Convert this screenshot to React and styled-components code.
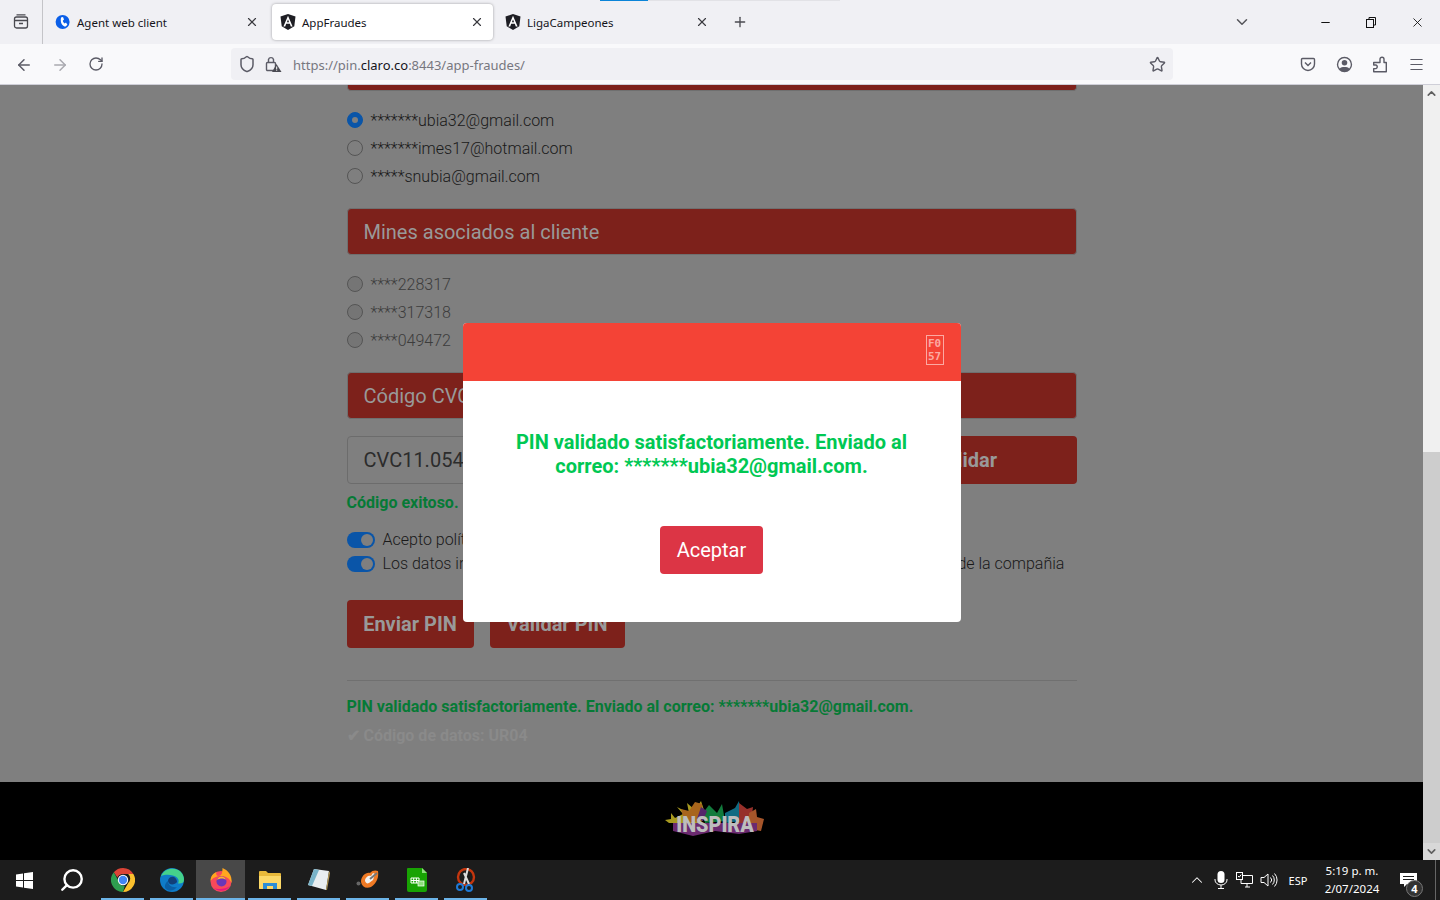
import React from 'react';
import styled, { createGlobalStyle } from 'styled-components';
import { ArrowLeft, ArrowRight, RotateCw, Shield, Star, ChevronDown, Minus, X, Plus, Menu, ChevronUp, Search } from 'lucide-react';

const GlobalStyle = createGlobalStyle`
  html, body { margin: 0; padding: 0; height: 100%; overflow: hidden; }
  body { font-family: Roboto, "Liberation Sans", sans-serif; }
  * { box-sizing: border-box; }
`;

const Screen = styled.div`
  width: 1440px;
  height: 900px;
  display: flex;
  flex-direction: column;
  overflow: hidden;
  background: #fff;
`;

/* ---- browser chrome ---- */
const TabStrip = styled.div`
  height: 44px;
  flex: none;
  display: flex;
  align-items: stretch;
  background: #f0f0f4;
  position: relative;
  font-family: "Noto Sans", "Open Sans", sans-serif;
`;
const LoadLine = styled.div`
  position: absolute;
  top: 0;
  left: 600px;
  width: 240px;
  height: 1px;
  background: linear-gradient(90deg, #0a84d8 0 48px, #e2e2e6 48px);
`;
const ViewsButton = styled.div`
  width: 43px;
  margin-right: 2px;
  display: flex;
  align-items: center;
  justify-content: center;
  border-right: 1px solid #c4c4c8;
  color: #4a4a50;
`;
const Tab = styled.div`
  width: 221px;
  height: 36px;
  margin: 4px 2px 0;
  padding: 0 9px 0 8px;
  display: flex;
  align-items: center;
  gap: 6px;
  font-size: 11.5px;
  color: #15141a;
  border-radius: 4px;
  background: ${p => (p.$active ? '#fff' : 'transparent')};
  box-shadow: ${p => (p.$active ? '0 0 3px rgba(0,0,0,.35)' : 'none')};
`;
const TabTitle = styled.span`
  flex: 1;
  white-space: nowrap;
`;
const TabClose = styled(X)`
  color: #3a3a40;
`;
const NewTab = styled.div`
  width: 36px;
  margin-left: 2px;
  display: flex;
  align-items: center;
  justify-content: center;
  color: #4a4a50;
`;
const StripEnd = styled.div`
  margin-left: auto;
  display: flex;
  align-items: center;
  color: #111;
`;
const ListTabs = styled.div`
  margin-right: 51px;
  display: flex;
  color: #55555a;
`;
const WinBtn = styled.div`
  width: 46px;
  height: 44px;
  display: flex;
  align-items: center;
  justify-content: center;
`;
const NavBar = styled.div`
  height: 41px;
  flex: none;
  display: flex;
  align-items: center;
  background: #f9f9fb;
  border-bottom: 1px solid #cfcfd8;
  color: #5b5b66;
`;
const NavBtn = styled.div`
  width: 36px;
  display: flex;
  justify-content: center;
  padding-top: 1px;
  color: ${p => (p.$off ? '#a9a9b0' : '#5b5b66')};
`;
const NavBtns = styled.div`
  display: flex;
  padding-left: 6px;
`;
const UrlBox = styled.div`
  width: 942px;
  height: 32px;
  margin-left: 117px;
  padding: 0 7px;
  border-radius: 4px;
  background: #f0f0f4;
  display: flex;
  align-items: center;
  gap: 8px;
`;
const UrlText = styled.div`
  flex: 1;
  margin: 2px 0 0 3px;
  font-family: "Noto Sans", "Open Sans", sans-serif;
  font-size: 13px;
  color: #77777f;
  white-space: nowrap;
  b { font-weight: 400; color: #15141a; }
`;
const NavEnd = styled.div`
  display: flex;
  margin-left: 117px;
  align-items: center;
`;
const NavEndBtn = styled.div`
  width: 36px;
  display: flex;
  justify-content: center;
`;

/* ---- page ---- */
const Middle = styled.div`
  flex: 1;
  min-height: 0;
  display: flex;
`;
const Viewport = styled.div`
  flex: 1;
  position: relative;
  overflow: hidden;
  display: flex;
  flex-direction: column;
  background: #7f7f7f;
`;
const Scrollbar = styled.div`
  width: 17px;
  background: #f0f0f0;
  display: flex;
  flex-direction: column;
  align-items: center;
`;
const ScrollArrow = styled.div`
  height: 17px;
  flex: none;
  display: flex;
  align-items: center;
  justify-content: center;
  color: #606060;
  background: ${p => (p.$down ? '#d8d8d8' : 'transparent')};
  width: 100%;
`;
const ScrollSpace = styled.div`
  height: ${p => p.$h}px;
  flex: none;
  width: 100%;
  background: ${p => (p.$thumb ? '#cdcdcd' : 'transparent')};
`;
const Content = styled.div`
  width: 730px;
  height: 697px;
  margin: 0 auto;
  flex: none;
  font-size: 16px;
  font-weight: 300;
  color: #191919;
`;
const RedBar = styled.div`
  height: 47px;
  margin-top: ${p => p.$mt || 0}px;
  background: #7d211b;
  border: 1px solid #6f6f6f;
  border-radius: 4px;
  padding-left: 16px;
  display: flex;
  align-items: center;
  font-size: 20px;
  font-weight: 400;
  color: #999;
`;
const TopBar = styled(RedBar)`
  height: 6px;
  border-top: 0;
  border-radius: 0 0 4px 4px;
`;
const OptionList = styled.div`
  margin-top: ${p => p.$mt}px;
  display: flex;
  flex-direction: column;
`;
const Option = styled.label`
  height: 28px;
  display: flex;
  align-items: center;
  gap: 8px;
  color: ${p => (p.$muted ? '#3c3c3c' : '#191919')};
`;
const Radio = styled.span`
  width: 16px;
  height: 16px;
  border-radius: 50%;
  background: ${p => (p.$on ? '#0a55a8' : p.$muted ? '#757575' : '#7f7f7f')};
  border: 1px solid ${p => (p.$on ? '#0a55a8' : '#555')};
  display: flex;
  align-items: center;
  justify-content: center;
  &::after {
    content: '';
    width: 6px;
    height: 6px;
    border-radius: 50%;
    background: ${p => (p.$on ? '#7f7f7f' : 'transparent')};
  }
`;
const CodeRow = styled.div`
  margin-top: 17px;
  display: flex;
  gap: 16px;
`;
const CodeInput = styled.div`
  flex: 1;
  height: 48px;
  padding-left: 16px;
  border: 1px solid #6c6c6c;
  border-radius: 4px;
  display: flex;
  align-items: center;
  font-size: 20px;
  font-weight: 400;
  color: #2c2c2c;
`;
const RedButton = styled.div`
  width: ${p => p.$w}px;
  height: 48px;
  background: #7d211b;
  border-radius: 4px;
  display: flex;
  align-items: center;
  justify-content: center;
  font-size: 20px;
  font-weight: 700;
  color: #999;
`;
const GreenNote = styled.div`
  margin-top: ${p => p.$mt}px;
  height: 20px;
  line-height: 20px;
  font-size: 16px;
  font-weight: 700;
  color: #067a36;
  white-space: nowrap;
`;
const Toggles = styled.div`
  margin-top: 15px;
  display: flex;
  flex-direction: column;
`;
const ToggleRow = styled.div`
  height: 24px;
  display: flex;
  align-items: center;
  gap: 8px;
  white-space: nowrap;
`;
const ToggleLabel = styled.span`
  padding-bottom: 2px;
`;
const Toggle = styled.span`
  width: 28px;
  height: 16px;
  flex: none;
  border-radius: 8px;
  background: #0a55a8;
  display: flex;
  justify-content: flex-end;
  align-items: center;
  padding-right: 2px;
  &::after {
    content: '';
    width: 12px;
    height: 12px;
    border-radius: 50%;
    background: #7f7f7f;
  }
`;
const ButtonRow = styled.div`
  margin-top: 24px;
  display: flex;
  gap: 16px;
`;
const Rule = styled.div`
  margin-top: 32px;
  height: 1px;
  background: #707070;
`;
const DataCode = styled.div`
  margin-top: 9px;
  height: 20px;
  line-height: 20px;
  font-size: 16px;
  font-weight: 700;
  color: #8a8a8a;
`;
const Footer = styled.div`
  flex: 1;
  background: #000;
  display: flex;
  align-items: center;
  justify-content: center;
  padding: 0 0 4px 6px;
`;

/* ---- modal ---- */
const Backdrop = styled.div`
  position: absolute;
  inset: 0;
  display: flex;
  align-items: center;
  justify-content: center;
`;
const Modal = styled.div`
  width: 498px;
  height: 299px;
  border-radius: 4px;
  background: #fff;
  overflow: hidden;
  display: flex;
  flex-direction: column;
  align-items: center;
`;
const ModalHead = styled.div`
  width: 100%;
  height: 58px;
  flex: none;
  background: #f44336;
  display: flex;
  align-items: center;
  justify-content: flex-end;
  padding: 0 17px 4px 0;
`;
const CloseGlyph = styled.div`
  width: 18px;
  height: 30px;
  border: 1px solid #fca9a2;
  color: #fca9a2;
  font: 700 11px/13px "DejaVu Sans Mono", monospace;
  display: flex;
  flex-direction: column;
  align-items: center;
  justify-content: center;
`;
const ModalMessage = styled.div`
  margin-top: 49px;
  width: 420px;
  text-align: center;
  font-size: 20px;
  line-height: 24px;
  font-weight: 700;
  color: #00c853;
`;
const AcceptButton = styled.div`
  margin-top: 48px;
  width: 103px;
  height: 48px;
  border-radius: 4px;
  background: #dc3545;
  color: #fff;
  font-size: 20px;
  display: flex;
  align-items: center;
  justify-content: center;
`;

/* ---- taskbar ---- */
const Taskbar = styled.div`
  height: 40px;
  flex: none;
  background: #1c1c1c;
  display: flex;
  align-items: stretch;
  color: #fff;
  font-family: "Noto Sans", "Open Sans", sans-serif;
`;
const StartCell = styled.div`
  width: 49px;
  display: flex;
  align-items: center;
  justify-content: center;
`;
const SearchGlyph = styled(Search)`
  transform: scaleX(-1);
  margin-right: 3px;
`;
const AppCell = styled.div`
  width: 49px;
  position: relative;
  display: flex;
  align-items: center;
  justify-content: center;
  background: ${p => (p.$active ? '#484848' : 'transparent')};
  &::after {
    content: '';
    position: absolute;
    bottom: 0;
    left: ${p => (p.$active ? 0 : '3px')};
    right: ${p => (p.$active ? 0 : '3px')};
    height: 2px;
    background: #6cb4e8;
  }
`;
const Tray = styled.div`
  margin-left: auto;
  display: flex;
  align-items: center;
  font-size: 11px;
`;
const TrayIcon = styled.div`
  width: 24px;
  display: flex;
  justify-content: center;
`;
const Lang = styled.div`
  margin-left: 4px;
  width: 26px;
  text-align: center;
`;
const Clock = styled.div`
  margin-left: 7px;
  width: 68px;
  text-align: center;
  font-size: 11.5px;
  line-height: 18px;
`;
const Notif = styled.div`
  width: 42px;
  margin: 0 6px 0 1px;
  position: relative;
  display: flex;
  justify-content: center;
`;
const NotifBadge = styled.span`
  position: absolute;
  top: 7px;
  left: 19px;
  width: 17px;
  height: 17px;
  border-radius: 50%;
  border: 1px solid #777;
  background: #333;
  font-size: 11px;
  font-weight: 700;
  line-height: 15px;
  text-align: center;
`;
const PeekEdge = styled.div`
  width: 5px;
  height: 100%;
  border-left: 1px solid #666;
`;

const FavAngular = () => (
  <svg width="16" height="16" viewBox="0 0 16 16">
    <path d="M8 0 15.5 2.6 14.3 12.2 8 16 1.7 12.2.5 2.6Z" fill="#1e1e24" />
    <path d="M8 1.8 3.4 12.4H5.2L6.2 9.8H9.8L10.8 12.4H12.6ZM6.9 8.2 8 5.4 9.1 8.2Z" fill="#fff" />
  </svg>
);
const FavPhone = () => (
  <svg width="16" height="16" viewBox="0 0 16 16">
    <circle cx="7.6" cy="8" r="7" fill="#0b5fe8" />
    <path d="M6 3.5 8 3 9 5.6 7.8 6.8C8 8 8.6 8.8 9.6 9.4L11 8.6 12.4 10.8 10.6 12.6C7.4 12.4 5 9 6 3.5Z" fill="#fff" />
  </svg>
);
const ViewsIcon = () => (
  <svg width="18" height="18" viewBox="0 0 18 18" fill="none" stroke="currentColor" strokeWidth="1.3">
    <rect x="2.5" y="4" width="13" height="11" rx="2" />
    <path d="M2.5 7.5H15.5M7 10.5H11M4.5 1.8H13.5" />
  </svg>
);
const LockWarn = () => (
  <svg width="18" height="18" viewBox="0 0 18 18" fill="none" stroke="#5b5b66" strokeWidth="1.4">
    <rect x="2.5" y="7.5" width="9" height="8" rx="1" />
    <path d="M4.5 7.5V4.5a2.6 2.6 0 0 1 5 0V7.5" />
    <path d="M12.5 9 17.5 17H8Z" fill="#4a4a52" stroke="none" />
    <path d="M12.7 11.5V14.5M12.7 15.3V16" stroke="#fff" strokeWidth="1" />
  </svg>
);
const PocketIcon = () => (
  <svg width="16" height="16" viewBox="0 0 16 16" fill="none" stroke="#5b5b66" strokeWidth="1.4">
    <path d="M2.5 2.5H13.5A1 1 0 0 1 14.5 3.5V8A6.5 6.5 0 0 1 1.5 8V3.5A1 1 0 0 1 2.5 2.5Z" />
    <path d="M5 6.5 8 9.5 11 6.5" />
  </svg>
);
const AccountIcon = () => (
  <svg width="17" height="17" viewBox="0 0 16 16" fill="#5b5b66">
    <path d="M8 .8a7.2 7.2 0 1 0 0 14.4A7.2 7.2 0 0 0 8 .8Zm0 1.4a5.8 5.8 0 0 1 4.4 9.6c-.8-1-2.5-1.4-4.4-1.4s-3.6.4-4.4 1.4A5.8 5.8 0 0 1 8 2.2Z" />
    <circle cx="8" cy="6.4" r="2.6" />
  </svg>
);
const ExtensionIcon = () => (
  <svg width="16" height="17" viewBox="0 0 16 17" fill="none" stroke="#5b5b66" strokeWidth="1.4" strokeLinejoin="round">
    <path d="M1.7 6.5H8V3.2a2 2 0 0 1 4 0V6.5H14.3V15.8H1.7V12.6H4a1.9 1.9 0 0 0 0-3.6H1.7Z" />
  </svg>
);
const RestoreIcon = () => (
  <svg width="12" height="12" viewBox="0 0 12 12" fill="none" stroke="#111" strokeWidth="1">
    <rect x="1.5" y="3.5" width="7" height="8" />
    <path d="M4 3.5V1.5H10.5V9H8.5" />
  </svg>
);
const WinLogo = () => (
  <svg width="17" height="17" viewBox="0 0 17 17" fill="#fff">
    <path d="M0 2.4 7 1.4V8H0ZM8 1.3 17 0V8H8ZM0 9H7V15.6L0 14.6ZM8 9H17V17L8 15.7Z" />
  </svg>
);
const ChromeIcon = () => (
  <svg width="24" height="24" viewBox="0 0 24 24">
    <path d="M12 0a12 12 0 0 1 10.4 6H12a6 6 0 0 0-5.6 3.6L2.8 4.3A12 12 0 0 1 12 0Z" fill="#db4437" />
    <path d="M22.4 6A12 12 0 0 1 12 24l5.2-9a6 6 0 0 0 0-9Z" fill="#fbc02d" />
    <path d="M2.8 4.3 7 12a6 6 0 0 0 6.8 5.8L12 24A12 12 0 0 1 2.8 4.3Z" fill="#2e9e4f" />
    <circle cx="12" cy="12" r="5.2" fill="#fff" />
    <circle cx="12" cy="12" r="4.2" fill="#4285f4" />
  </svg>
);
const EdgeIcon = () => (
  <svg width="24" height="24" viewBox="0 0 24 24">
    <circle cx="12" cy="12" r="12" fill="#0f7cc9" />
    <path d="M1 8C4 1 12-1 18 2c4 2 6 6 6 10 0 3-3 4-6 3.4 1-2 1-4-1-6C13 6 5 6 1 8Z" fill="#45d18b" />
    <path d="M8 13c0-3 3-5 6-4 2 1 3 3 3 5-2 3-8 4-9-1Z" fill="#123f78" />
    <path d="M8 13c0 4 4 7 9 6-2 3-7 5-11 2-2-2-1-6 2-8Z" fill="#0b5fa5" />
  </svg>
);
const FirefoxIcon = () => (
  <svg width="24" height="24" viewBox="0 0 24 24">
    <circle cx="12" cy="13.5" r="10.5" fill="#f8495a" />
    <path d="M1.5 13c0-5 3-8 6-9-1 2 0 4 2 4 3 0 4-3 4-8 5 2 10 7 9 15-2-5-6-7-10-7-5 0-9 2-11 5Z" fill="#ffa61f" />
    <path d="M5 20c4 4 12 4 16-2-4 3-12 4-16 2Z" fill="#e5177f" />
    <circle cx="12.5" cy="13.5" r="5" fill="#6a36b8" />
    <path d="M8 12c3-2 7-2 9 0-1-4-7-5-9 0Z" fill="#ffb52a" />
  </svg>
);
const FolderIcon = () => (
  <svg width="22" height="20" viewBox="0 0 22 20">
    <path d="M0 2a1 1 0 0 1 1-1h6l2 2h12a1 1 0 0 1 1 1v14a1 1 0 0 1-1 1H1a1 1 0 0 1-1-1Z" fill="#e8b93a" />
    <path d="M0 6H22V18a1 1 0 0 1-1 1H1a1 1 0 0 1-1-1Z" fill="#fcd968" />
    <path d="M4 19V13H18V19H14V16H8V19Z" fill="#2c8ed6" />
  </svg>
);
const NotepadIcon = () => (
  <svg width="24" height="24" viewBox="0 0 24 24">
    <path d="M7 1 22 3 19 22 1 17Z" fill="#e8eef0" />
    <path d="M7 1 12 2 5 18 1 17Z" fill="#79b4c9" />
    <path d="M22 3 23 5 20 22 19 22Z" fill="#b59b58" />
  </svg>
);
const SwirlIcon = () => (
  <svg width="24" height="24" viewBox="0 0 24 24" fill="none">
    <path d="M5 14C5 8 10 4 14 5 16 2 20 2 22 3 23 9 21 15 15 19 10 21 6 19 5 14Z" fill="#ef7a25" />
    <path d="M9 13C9 9 13 7 15 8L17 5 19 6 17 12 13 15C11 16 10 15 9 13Z" fill="#f2f2f2" />
    <path d="M14 11 21 5" stroke="#777" strokeWidth="2" />
    <circle cx="2.5" cy="15.5" r="2" fill="#666" />
  </svg>
);
const CalcIcon = () => (
  <svg width="20" height="24" viewBox="0 0 20 24">
    <path d="M1 0H15L20 5V22a2 2 0 0 1-2 2H2a2 2 0 0 1-2-2V1a1 1 0 0 1 1-1Z" fill="#18a303" />
    <path d="M15 0 20 5H15Z" fill="#8ee07c" />
    <path d="M4 10H12V15H4ZM4 12.5H12M6.7 10V15M9.4 10V15" stroke="#fff" strokeWidth="1" fill="none" />
    <rect x="11" y="13" width="6" height="5" fill="#8ee07c" stroke="#fff" strokeWidth=".7" />
  </svg>
);
const SnipIcon = () => (
  <svg width="22" height="24" viewBox="0 0 22 24" fill="none">
    <circle cx="11" cy="9" r="8" stroke="#c4360e" strokeWidth="2.4" />
    <path d="M13 0 9 16M9 5 14 16" stroke="#ddd" strokeWidth="2" />
    <circle cx="5" cy="19" r="3" stroke="#1f7ad6" strokeWidth="2" />
    <circle cx="14" cy="20" r="3" stroke="#1f7ad6" strokeWidth="2" />
  </svg>
);
const MicIcon = () => (
  <svg width="14" height="18" viewBox="0 0 14 18" fill="none" stroke="#fff" strokeWidth="1">
    <rect x="3.5" y="0" width="7" height="12" rx="3.5" fill="#fff" stroke="none" />
    <path d="M1 8V9A6 5 0 0 0 13 9V8M7 14V17M4 17.5H10" />
  </svg>
);
const NetworkIcon = () => (
  <svg width="18" height="16" viewBox="0 0 18 16" fill="none" stroke="#fff" strokeWidth="1">
    <path d="M5 3.5H16.5V11.5H5V3.5M9 15H14M11 11.5V15" />
    <rect x="0.5" y="0.5" width="6" height="7" fill="#1c1c1c" />
    <path d="M2 4 3.2 5.2 5.2 2.6" />
  </svg>
);
const SpeakerIcon = () => (
  <svg width="18" height="16" viewBox="0 0 18 16" fill="none" stroke="#fff" strokeWidth="1">
    <path d="M1 5.5H4L8 2V14L4 10.5H1Z" />
    <path d="M10.5 5.5A3.5 3.5 0 0 1 10.5 10.5M12.5 3.5A6.5 6.5 0 0 1 12.5 12.5M14.5 1.5A9.5 9.5 0 0 1 14.5 14.5" />
  </svg>
);
const NotifIcon = () => (
  <svg width="17" height="15" viewBox="0 0 17 15" fill="#fff">
    <path d="M0 0H17V11H7L4 14V11H0ZM3 3V4H14V3ZM3 6V7H14V6Z" fillRule="evenodd" />
  </svg>
);
const InspiraLogo = () => (
  <svg width="100" height="40" viewBox="0 0 100 40">
    <path d="M0 21 6 20 6 14 10 19 18 15 12 8 24 14 22 4 30 11 36 2 40 14 36 24H4Z" fill="#a89a20" />
    <path d="M16 10 24 12 30 3 37 5 38 22 20 24Z" fill="#a8651c" />
    <path d="M38 14 44 6 52 14 57 5 60 22 40 24Z" fill="#127a3c" />
    <path d="M36 8 42 12 38 22 32 20Z" fill="#55246b" />
    <path d="M60 14 70 9 74 2 76 22 60 24Z" fill="#116a82" />
    <path d="M74 4 82 10 88 8 86 24 74 24Z" fill="#96302a" />
    <path d="M84 14 91 10 92 18 99 20 96 32 84 30Z" fill="#a5552a" />
    <path d="M8 24H92V32L74 35 50 32 28 37 8 32Z" fill="#6b2a70" />
    <text transform="translate(50 33) scale(.9 1)" textAnchor="middle" fontFamily="Roboto, sans-serif" fontWeight="900" fontSize="22" fill="#bdbdbd">INSPIRA</text>
  </svg>
);

function App() {
  return (
    <Screen>
      <GlobalStyle />
      <TabStrip>
        <LoadLine />
        <ViewsButton><ViewsIcon /></ViewsButton>
        <Tab><FavPhone /><TabTitle>Agent web client</TabTitle><TabClose size={14} /></Tab>
        <Tab $active><FavAngular /><TabTitle>AppFraudes</TabTitle><TabClose size={14} /></Tab>
        <Tab><FavAngular /><TabTitle>LigaCampeones</TabTitle><TabClose size={14} /></Tab>
        <NewTab><Plus size={16} /></NewTab>
        <StripEnd>
          <ListTabs><ChevronDown size={18} /></ListTabs>
          <WinBtn><Minus size={13} /></WinBtn>
          <WinBtn><RestoreIcon /></WinBtn>
          <WinBtn><X size={15} strokeWidth={1.4} /></WinBtn>
        </StripEnd>
      </TabStrip>

      <NavBar>
        <NavBtns>
          <NavBtn><ArrowLeft size={18} /></NavBtn>
          <NavBtn $off><ArrowRight size={18} /></NavBtn>
          <NavBtn><RotateCw size={16} /></NavBtn>
        </NavBtns>
        <UrlBox>
          <Shield size={18} />
          <LockWarn />
          <UrlText>https://pin.<b>claro.co</b>:8443/app-fraudes/</UrlText>
          <Star size={17} />
        </UrlBox>
        <NavEnd>
          <NavEndBtn><PocketIcon /></NavEndBtn>
          <NavEndBtn><AccountIcon /></NavEndBtn>
          <NavEndBtn><ExtensionIcon /></NavEndBtn>
          <NavEndBtn><Menu size={17} strokeWidth={1.5} /></NavEndBtn>
        </NavEnd>
      </NavBar>

      <Middle>
        <Viewport>
          <Content>
            <TopBar />
            <OptionList $mt={15}>
              <Option><Radio $on /><span>*******ubia32@gmail.com</span></Option>
              <Option><Radio /><span>*******imes17@hotmail.com</span></Option>
              <Option><Radio /><span>*****snubia@gmail.com</span></Option>
            </OptionList>
            <RedBar $mt={18}>Mines asociados al cliente</RedBar>
            <OptionList $mt={15}>
              <Option $muted><Radio $muted /><span>****228317</span></Option>
              <Option $muted><Radio $muted /><span>****317318</span></Option>
              <Option $muted><Radio $muted /><span>****049472</span></Option>
            </OptionList>
            <RedBar $mt={18}>Código CVC</RedBar>
            <CodeRow>
              <CodeInput>CVC11.054</CodeInput>
              <RedButton $w={222}>Validar</RedButton>
            </CodeRow>
            <GreenNote $mt={9}>Código exitoso.</GreenNote>
            <Toggles>
              <ToggleRow><Toggle /><ToggleLabel>Acepto políticas</ToggleLabel></ToggleRow>
              <ToggleRow><Toggle /><ToggleLabel>Los datos ingresados son verídicos y se ajustan a todas las políticas de seguridad de la compañia</ToggleLabel></ToggleRow>
            </Toggles>
            <ButtonRow>
              <RedButton $w={127}>Enviar PIN</RedButton>
              <RedButton $w={135}>Validar PIN</RedButton>
            </ButtonRow>
            <Rule />
            <GreenNote $mt={16}>PIN validado satisfactoriamente. Enviado al correo: *******ubia32@gmail.com.</GreenNote>
            <DataCode>✔ Código de datos: UR04</DataCode>
          </Content>
          <Footer><InspiraLogo /></Footer>
          <Backdrop>
            <Modal>
              <ModalHead>
                <CloseGlyph><span>F0</span><span>57</span></CloseGlyph>
              </ModalHead>
              <ModalMessage>PIN validado satisfactoriamente. Enviado al correo: *******ubia32@gmail.com.</ModalMessage>
              <AcceptButton>Aceptar</AcceptButton>
            </Modal>
          </Backdrop>
        </Viewport>
        <Scrollbar>
          <ScrollArrow><ChevronUp size={13} strokeWidth={3} /></ScrollArrow>
          <ScrollSpace $h={350} />
          <ScrollSpace $h={391} $thumb />
          <ScrollArrow $down><ChevronDown size={13} strokeWidth={3} /></ScrollArrow>
        </Scrollbar>
      </Middle>

      <Taskbar>
        <StartCell><WinLogo /></StartCell>
        <StartCell><SearchGlyph size={26} strokeWidth={2.2} /></StartCell>
        <AppCell><ChromeIcon /></AppCell>
        <AppCell><EdgeIcon /></AppCell>
        <AppCell $active><FirefoxIcon /></AppCell>
        <AppCell><FolderIcon /></AppCell>
        <AppCell><NotepadIcon /></AppCell>
        <AppCell><SwirlIcon /></AppCell>
        <AppCell><CalcIcon /></AppCell>
        <AppCell><SnipIcon /></AppCell>
        <Tray>
          <TrayIcon><ChevronUp size={18} strokeWidth={1.4} /></TrayIcon>
          <TrayIcon><MicIcon /></TrayIcon>
          <TrayIcon><NetworkIcon /></TrayIcon>
          <TrayIcon><SpeakerIcon /></TrayIcon>
          <Lang>ESP</Lang>
          <Clock>5:19 p. m.<br />2/07/2024</Clock>
          <Notif><NotifIcon /><NotifBadge>4</NotifBadge></Notif>
          <PeekEdge />
        </Tray>
      </Taskbar>
    </Screen>
  );
}

export default App;
